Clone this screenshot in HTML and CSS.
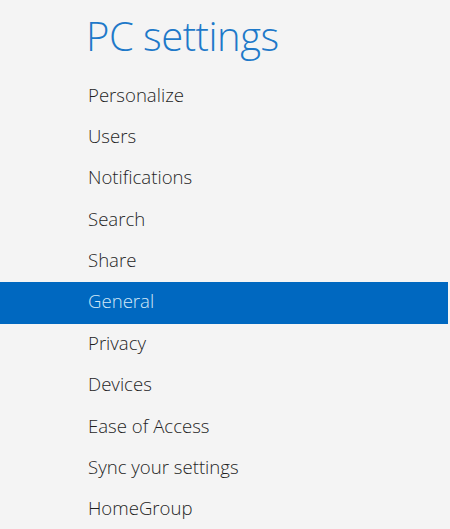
FILE: index.html
```html
<!DOCTYPE html>
<html lang="en">
<head>
<meta charset="utf-8">
<title>PC settings</title>
<link rel="stylesheet" href="styles.css">
</head>
<body>
<div class="page">
  <h1 class="title">PC settings</h1>
  <ul class="nav">
    <li class="nav-item">Personalize</li>
    <li class="nav-item">Users</li>
    <li class="nav-item">Notifications</li>
    <li class="nav-item">Search</li>
    <li class="nav-item">Share</li>
    <li class="nav-item is-selected">General</li>
    <li class="nav-item">Privacy</li>
    <li class="nav-item">Devices</li>
    <li class="nav-item">Ease of Access</li>
    <li class="nav-item">Sync your settings</li>
    <li class="nav-item">HomeGroup</li>
  </ul>
</div>
</body>
</html>
```

FILE: styles.css
```css
html, body {
  margin: 0;
  padding: 0;
  background: #f4f4f4;
}
body {
  font-family: "Open Sans", "Noto Sans", sans-serif;
  width: 450px;
  height: 529px;
  overflow: hidden;
}
.page {
  display: flex;
  flex-direction: column;
}
.title {
  margin: 0;
  padding: 12px 0 0 86px;
  height: 75.5px;
  box-sizing: border-box;
  font-size: 40px;
  font-weight: 300;
  line-height: 48px;
  color: #1e79c9;
  letter-spacing: -0.5px;
}
.nav {
  list-style: none;
  margin: 0;
  padding: 0;
  width: 448px;
}
.nav-item {
  height: 41.4px;
  line-height: 38px;
  padding-left: 88px;
  font-size: 18.6px;
  font-weight: 300;
  color: #1f1f1f;
}
.nav-item.is-selected {
  background: #0068c0;
  color: #d4e8f8;
}
```
